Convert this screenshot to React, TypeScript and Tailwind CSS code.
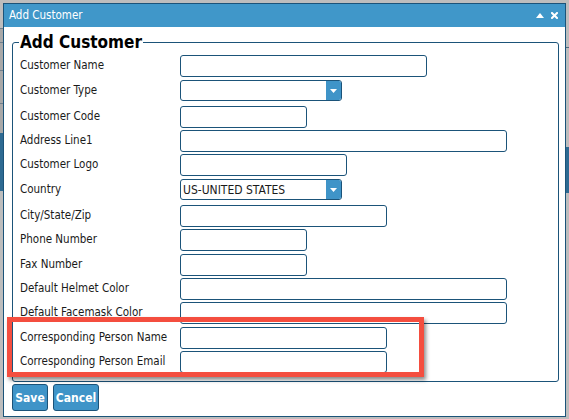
import React from "react";

type Row = { label: string; kind: "input" | "select"; w: string; h: string; value?: string };

const rows: Row[] = [
  { label: "Customer Name", kind: "input", w: "w-[247px]", h: "h-[25px]" },
  { label: "Customer Type", kind: "select", w: "w-[162px]", h: "h-[26px]" },
  { label: "Customer Code", kind: "input", w: "w-[127px]", h: "h-[24px]" },
  { label: "Address Line1", kind: "input", w: "w-[327px]", h: "h-[24px]" },
  { label: "Customer Logo", kind: "input", w: "w-[167px]", h: "h-[25px]" },
  { label: "Country", kind: "select", w: "w-[162px]", h: "h-[26px]", value: "US-UNITED STATES" },
  { label: "City/State/Zip", kind: "input", w: "w-[207px]", h: "h-[24px]" },
  { label: "Phone Number", kind: "input", w: "w-[127px]", h: "h-[25px]" },
  { label: "Fax Number", kind: "input", w: "w-[127px]", h: "h-[24px]" },
  { label: "Default Helmet Color", kind: "input", w: "w-[327px]", h: "h-[24px]" },
  { label: "Default Facemask Color", kind: "input", w: "w-[327px]", h: "h-[25px]" },
  { label: "Corresponding Person Name", kind: "input", w: "w-[207px]", h: "h-[24px]" },
  { label: "Corresponding Person Email", kind: "input", w: "w-[207px]", h: "h-[22px]" },
];

const font = { fontFamily: '"DejaVu Sans Condensed", "DejaVu Sans", Verdana, sans-serif' };

function Field({ row }: { row: Row }) {
  if (row.kind === "select") {
    return (
      <div className={`${row.w} h-[21px] flex border border-[#1b5379] rounded-[3px] overflow-hidden bg-white`}>
        <div className="flex-1 flex items-center pl-[2px] text-[12px] text-[#1a1a1a] leading-none">
          {row.value ?? ""}
        </div>
        <div className="w-[15px] bg-[#3f94c8] flex items-center justify-center">
          <svg width="7" height="4" viewBox="0 0 7 4">
            <path d="M0 0 H7 L3.5 4 Z" fill="#ffffff" />
          </svg>
        </div>
      </div>
    );
  }
  return <div className={`${row.w} h-[22px] border border-[#1b5379] rounded-[3px] bg-white`} />;
}

export default function App() {
  return (
    <div className="relative w-[569px] h-[419px] overflow-hidden bg-[#bdbdbd]" style={font}>
      {/* background page peeking */}
      <div className="absolute left-0 top-[28px] w-[4px] h-[105px] bg-[#a8a8a8] border-t border-[#6f7f8c]" />
      <div className="absolute left-0 top-[42px] w-[4px] h-px bg-[#6f7f8c]" />
      <div className="absolute left-0 top-[70px] w-[4px] h-px bg-[#6f7f8c]" />
      <div className="absolute left-0 top-[103px] w-[4px] h-px bg-[#6f7f8c]" />
      <div className="absolute left-0 top-[133px] w-[4px] h-[58px] bg-[#2e6a92]" />
      <div className="absolute right-0 top-[47px] w-[4px] h-px bg-[#4f6b80]" />
      <div className="absolute right-0 top-[147px] w-[4px] h-[46px] bg-[#2e6a92]" />

      <div className="absolute left-[3px] top-[3px] w-[563px] h-[414px] border border-[#1b5379] bg-white flex flex-col">
        <div className="h-[23px] bg-[#4097c9] flex items-center justify-between pl-[5px] pr-[7px] text-white">
          <span className="text-[11.5px] leading-none">Add Customer</span>
          <div className="flex items-center gap-[7px]">
            <svg width="8" height="5" viewBox="0 0 8 5">
              <path d="M0 5 L4 0 L8 5 Z" fill="#ffffff" />
            </svg>
            <svg width="7" height="7" viewBox="0 0 7 7">
              <path d="M1 1 L6 6 M6 1 L1 6" stroke="#ffffff" strokeWidth="2" strokeLinecap="square" />
            </svg>
          </div>
        </div>

        <div className="pl-[8px] pt-[6px]">
          <fieldset className="w-[547px] h-[349px] border border-[#1b5379] rounded-[3px] pl-[6px]">
            <legend className="px-[1px] text-[17px] font-bold leading-[18px] text-black">Add Customer</legend>
            <div className="pt-[4px] pl-[1px] flex flex-col">
              {rows.map((r) => (
                <div key={r.label} className={`${r.h} flex items-start`}>
                  <div className="w-[160px] h-[22px] flex items-center text-[11.5px] text-[#1a1a1a] leading-none">
                    {r.label}
                  </div>
                  <Field row={r} />
                </div>
              ))}
            </div>
          </fieldset>
          <div className="flex gap-[5px] mt-[2px]">
            <button className="w-[36px] h-[27px] bg-[#3f94c8] border border-[#1b5379] rounded-[3px] text-white text-[12px] font-bold leading-none">
              Save
            </button>
            <button className="w-[46px] h-[27px] bg-[#3f94c8] border border-[#1b5379] rounded-[3px] text-white text-[12px] font-bold leading-none">
              Cancel
            </button>
          </div>
        </div>
      </div>

      {/* annotation */}
      <div className="absolute left-[7px] top-[317px] w-[417px] h-[60px] border-[5px] border-[#f44e3f] shadow-[2px_3px_4px_rgba(0,0,0,0.45)]" />
    </div>
  );
}
